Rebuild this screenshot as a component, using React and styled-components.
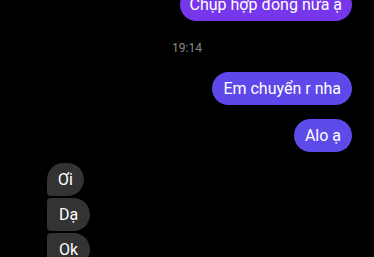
import React from "react";
import styled, { createGlobalStyle } from "styled-components";

const GlobalStyle = createGlobalStyle`
  html, body {
    margin: 0;
    padding: 0;
    background: #000;
    overflow: hidden;
  }
  body {
    font-family: Roboto, "Noto Sans", "Liberation Sans", sans-serif;
  }
`;

const Screen = styled.div`
  width: 374px;
  height: 257px;
  background: #000;
  overflow: hidden;
`;

const Thread = styled.div`
  display: flex;
  flex-direction: column;
  margin-top: -12px;
`;

const Row = styled.div`
  display: flex;
  justify-content: ${props => (props.mine ? "flex-end" : "flex-start")};
  padding: ${props => (props.mine ? "0 22px 0 0" : "0 0 0 47px")};
  margin-top: ${props => props.gap || 0}px;
`;

const Bubble = styled.div`
  box-sizing: border-box;
  height: 33px;
  display: flex;
  align-items: center;
  padding: 0 ${props => props.pad || 12}px;
  font-size: 16px;
  line-height: 20px;
  color: #fff;
  white-space: nowrap;
  background: ${props => props.color || "#333333"};
  border-radius: ${props => props.radius || "17px"};
`;

const Stamp = styled.div`
  height: 17px;
  margin-top: 19px;
  margin-bottom: 15px;
  text-align: center;
  font-size: 12px;
  line-height: 17px;
  color: #8a8a8a;
`;

export default function App() {
  return (
    <Screen>
      <GlobalStyle />
      <Thread>
        <Row mine>
          <Bubble color="#7637ec" pad={10}>
            Chụp hợp đồng nữa ạ
          </Bubble>
        </Row>
        <Stamp>19:14</Stamp>
        <Row mine>
          <Bubble color="#5f48ea" pad={11}>Em chuyển r nha</Bubble>
        </Row>
        <Row mine gap={14}>
          <Bubble color="#5d4be9" pad={11}>Alo ạ</Bubble>
        </Row>
        <Row gap={11}>
          <Bubble radius="17px 17px 17px 4px" pad={11}>Ơi</Bubble>
        </Row>
        <Row gap={2}>
          <Bubble radius="4px 17px 17px 4px">Dạ</Bubble>
        </Row>
        <Row gap={2}>
          <Bubble radius="4px 17px 17px 4px">Ok</Bubble>
        </Row>
      </Thread>
    </Screen>
  );
}
